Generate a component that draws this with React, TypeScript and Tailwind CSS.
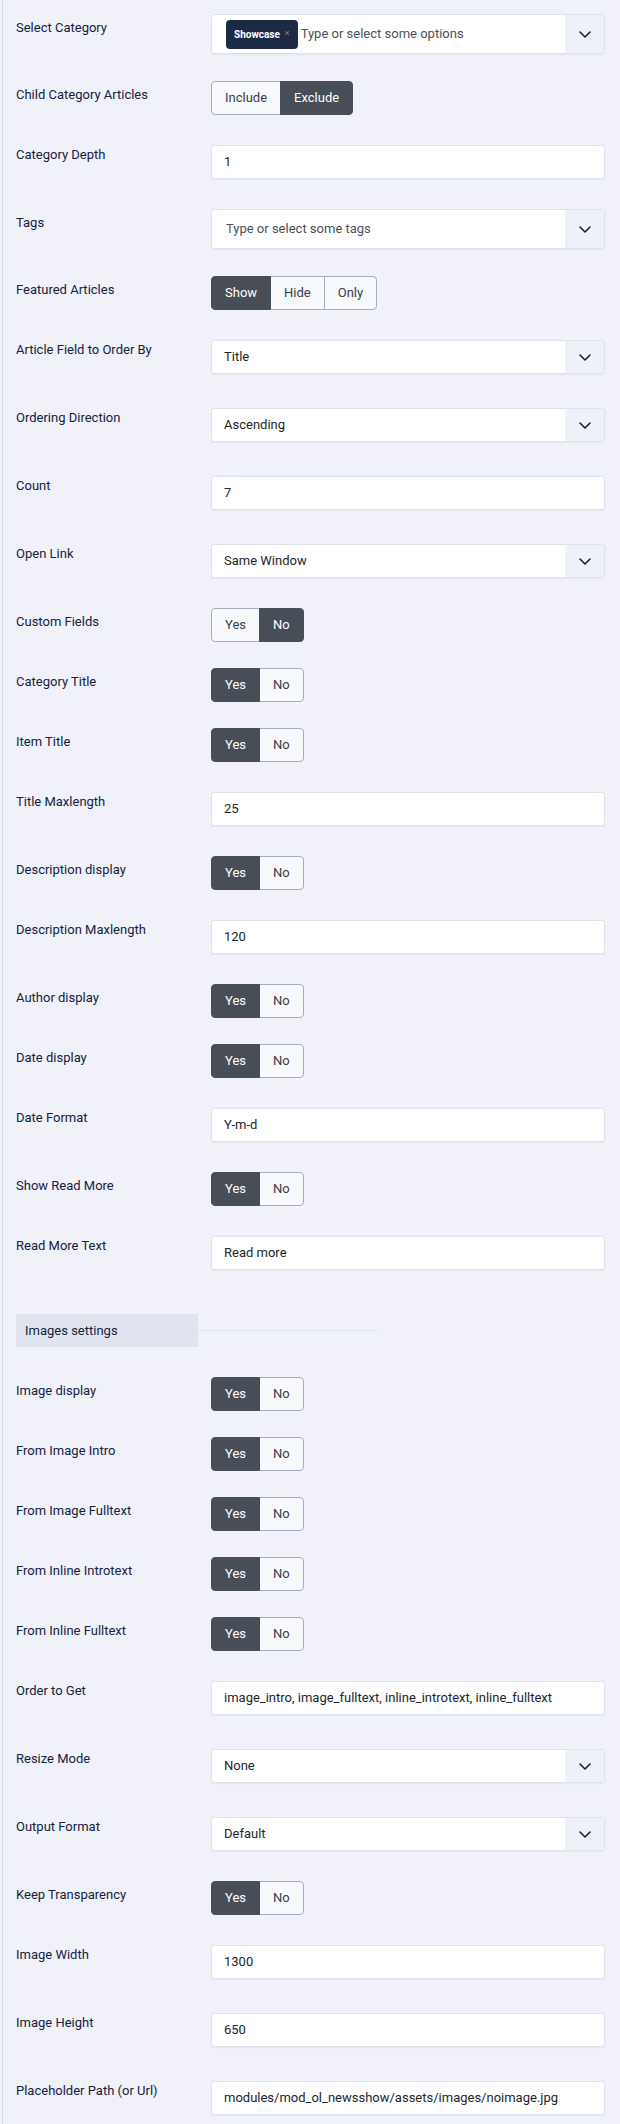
import React from "react";

type Field =
  | { kind: "choices"; label: string; tag?: string; placeholder: string }
  | { kind: "toggle"; label: string; options: string[]; active: number }
  | { kind: "input"; label: string; value: string }
  | { kind: "select"; label: string; value: string };

const general: Field[] = [
  { kind: "choices", label: "Select Category", tag: "Showcase", placeholder: "Type or select some options" },
  { kind: "toggle", label: "Child Category Articles", options: ["Include", "Exclude"], active: 1 },
  { kind: "input", label: "Category Depth", value: "1" },
  { kind: "choices", label: "Tags", placeholder: "Type or select some tags" },
  { kind: "toggle", label: "Featured Articles", options: ["Show", "Hide", "Only"], active: 0 },
  { kind: "select", label: "Article Field to Order By", value: "Title" },
  { kind: "select", label: "Ordering Direction", value: "Ascending" },
  { kind: "input", label: "Count", value: "7" },
  { kind: "select", label: "Open Link", value: "Same Window" },
  { kind: "toggle", label: "Custom Fields", options: ["Yes", "No"], active: 1 },
  { kind: "toggle", label: "Category Title", options: ["Yes", "No"], active: 0 },
  { kind: "toggle", label: "Item Title", options: ["Yes", "No"], active: 0 },
  { kind: "input", label: "Title Maxlength", value: "25" },
  { kind: "toggle", label: "Description display", options: ["Yes", "No"], active: 0 },
  { kind: "input", label: "Description Maxlength", value: "120" },
  { kind: "toggle", label: "Author display", options: ["Yes", "No"], active: 0 },
  { kind: "toggle", label: "Date display", options: ["Yes", "No"], active: 0 },
  { kind: "input", label: "Date Format", value: "Y-m-d" },
  { kind: "toggle", label: "Show Read More", options: ["Yes", "No"], active: 0 },
  { kind: "input", label: "Read More Text", value: "Read more" },
];

const images: Field[] = [
  { kind: "toggle", label: "Image display", options: ["Yes", "No"], active: 0 },
  { kind: "toggle", label: "From Image Intro", options: ["Yes", "No"], active: 0 },
  { kind: "toggle", label: "From Image Fulltext", options: ["Yes", "No"], active: 0 },
  { kind: "toggle", label: "From Inline Introtext", options: ["Yes", "No"], active: 0 },
  { kind: "toggle", label: "From Inline Fulltext", options: ["Yes", "No"], active: 0 },
  { kind: "input", label: "Order to Get", value: "image_intro, image_fulltext, inline_introtext, inline_fulltext" },
  { kind: "select", label: "Resize Mode", value: "None" },
  { kind: "select", label: "Output Format", value: "Default" },
  { kind: "toggle", label: "Keep Transparency", options: ["Yes", "No"], active: 0 },
  { kind: "input", label: "Image Width", value: "1300" },
  { kind: "input", label: "Image Height", value: "650" },
  { kind: "input", label: "Placeholder Path (or Url)", value: "modules/mod_ol_newsshow/assets/images/noimage.jpg" },
];

function Chevron() {
  return (
    <span className="flex w-[39px] shrink-0 items-center justify-center self-stretch bg-[#eef1f8]">
      <svg width="12" height="7" viewBox="0 0 12 7" fill="none" aria-hidden>
        <path d="M1 1l5 5 5-5" stroke="#1f2328" strokeWidth="1.6" strokeLinecap="round" strokeLinejoin="round" />
      </svg>
    </span>
  );
}

function Control({ field }: { field: Field }) {
  if (field.kind === "toggle") {
    return (
      <div className="inline-flex h-[34px] align-top">
        {field.options.map((opt, i) => {
          const on = i === field.active;
          return (
            <span
              key={opt}
              className={`flex items-center border px-[13px] text-[13px] ${i > 0 ? "-ml-px" : ""} ${
                i === 0 ? "rounded-l-[4px]" : ""
              } ${i === field.options.length - 1 ? "rounded-r-[4px]" : ""} ${
                on ? "relative z-10 border-[#474e57] bg-[#474e57] text-white" : "border-[#a3adbf] bg-[#f8f9fc] text-[#3b4046]"
              }`}
            >
              {opt}
            </span>
          );
        })}
      </div>
    );
  }
  if (field.kind === "choices") {
    return (
      <div className="flex h-[40px] items-center overflow-hidden rounded-[3px] border border-[#dde2eb] bg-white shadow-[0_1px_2px_rgba(30,40,70,0.05)]">
        <div className="flex flex-1 items-center pl-[14px]">
          {field.tag && (
            <span className="mr-[3px] flex h-[29px] items-center gap-[5px] rounded-[4px] bg-[#1c2a46] px-[8px] text-[10px] font-bold text-white">
              {field.tag}
              <span className="text-[9px] font-normal text-[#7d879a]">×</span>
            </span>
          )}
          <span className="text-[13px] text-[#4b5058]">{field.placeholder}</span>
        </div>
        <Chevron />
      </div>
    );
  }
  return (
    <div className="py-1">
      <div className="flex h-[34px] items-center overflow-hidden rounded-[3px] border border-[#dde2eb] bg-white shadow-[0_1px_2px_rgba(30,40,70,0.05)]">
        <span className="flex-1 truncate pl-3 text-[13px] text-[#22262a]">{field.value}</span>
        {field.kind === "select" && <Chevron />}
      </div>
    </div>
  );
}

function Row({ field }: { field: Field }) {
  return (
    <div className={`flex items-start ${field.kind === "choices" ? "mb-[27px]" : "mb-[26px]"}`}>
      <label className="w-[195px] shrink-0 pt-1 text-[13px] leading-5 text-[#15233f]">{field.label}</label>
      <div className="min-w-0 flex-1">
        <Control field={field} />
      </div>
    </div>
  );
}

export default function App() {
  return (
    <div className="min-h-screen bg-[#f0f1f9] font-['Roboto',sans-serif]">
      <div className="ml-[2px] min-h-screen border-l border-[#d6dcea] pt-[14px] pr-[15px] pl-[13px]">
        {general.map((f) => (
          <Row key={f.label} field={f} />
        ))}
        <div className="mt-[40px] mb-[30px] flex items-center">
          <div className="flex h-[33px] w-[182px] items-center bg-[#e0e4ee] pl-[9px] text-[13px] text-[#15233f]">
            Images settings
          </div>
          <div className="h-px w-[180px] bg-[#dfe3ec]" />
        </div>
        {images.map((f) => (
          <Row key={f.label} field={f} />
        ))}
      </div>
    </div>
  );
}
